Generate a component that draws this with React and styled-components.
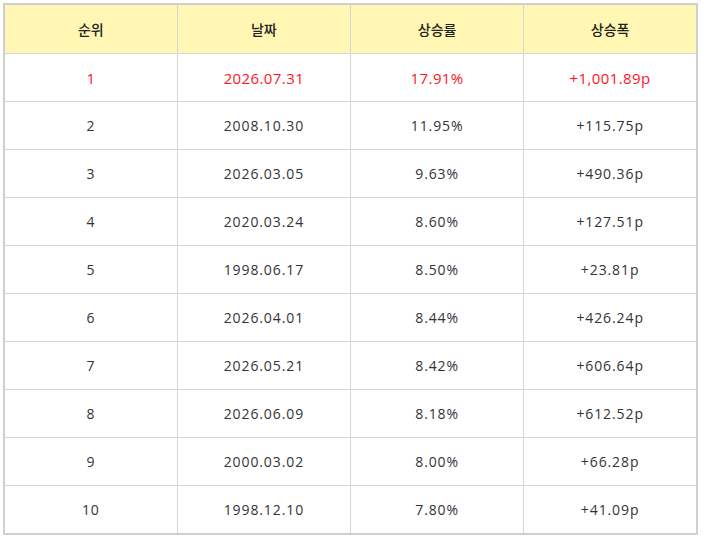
import React from "react";
import styled, { createGlobalStyle } from "styled-components";

const Global = createGlobalStyle`
  html, body { margin: 0; padding: 0; background: #fff; }
  body { font-family: "Open Sans", "Noto Sans CJK KR", sans-serif; }
`;

const Wrap = styled.div`
  padding: 3px 6px 3px 3px;
`;

const Table = styled.table`
  width: 695px;
  border-collapse: collapse;
  border: 2px solid #cfcfcf;
  table-layout: fixed;
`;

const Th = styled.th`
  height: 48px;
  padding: 0;
  background: #fff7b3;
  border: 1px solid #d6d6d6;
  font-family: "Noto Sans CJK KR", sans-serif;
  font-size: 14px;
  font-weight: 500;
  color: #222;
  text-align: center;
`;

const Td = styled.td`
  height: 47px;
  padding: 0;
  border: 1px solid #d6d6d6;
  font-size: ${(p) => (p.$top ? "15px" : "14px")};
  font-weight: 400;
  color: ${(p) => (p.$top ? "#ff1428" : "#333")};
  text-align: center;
  letter-spacing: ${(p) => (p.$top ? "0.4px" : "0.9px")};
`;

const rows = [
  ["1", "2026.07.31", "17.91%", "+1,001.89p"],
  ["2", "2008.10.30", "11.95%", "+115.75p"],
  ["3", "2026.03.05", "9.63%", "+490.36p"],
  ["4", "2020.03.24", "8.60%", "+127.51p"],
  ["5", "1998.06.17", "8.50%", "+23.81p"],
  ["6", "2026.04.01", "8.44%", "+426.24p"],
  ["7", "2026.05.21", "8.42%", "+606.64p"],
  ["8", "2026.06.09", "8.18%", "+612.52p"],
  ["9", "2000.03.02", "8.00%", "+66.28p"],
  ["10", "1998.12.10", "7.80%", "+41.09p"],
];

export default function App() {
  return (
    <>
      <Global />
      <Wrap>
        <Table>
          <thead>
            <tr>
              <Th>순위</Th>
              <Th>날짜</Th>
              <Th>상승률</Th>
              <Th>상승폭</Th>
            </tr>
          </thead>
          <tbody>
            {rows.map((r, i) => (
              <tr key={r[0]}>
                {r.map((c, j) => (
                  <Td key={j} $top={i === 0}>
                    {c}
                  </Td>
                ))}
              </tr>
            ))}
          </tbody>
        </Table>
      </Wrap>
    </>
  );
}
